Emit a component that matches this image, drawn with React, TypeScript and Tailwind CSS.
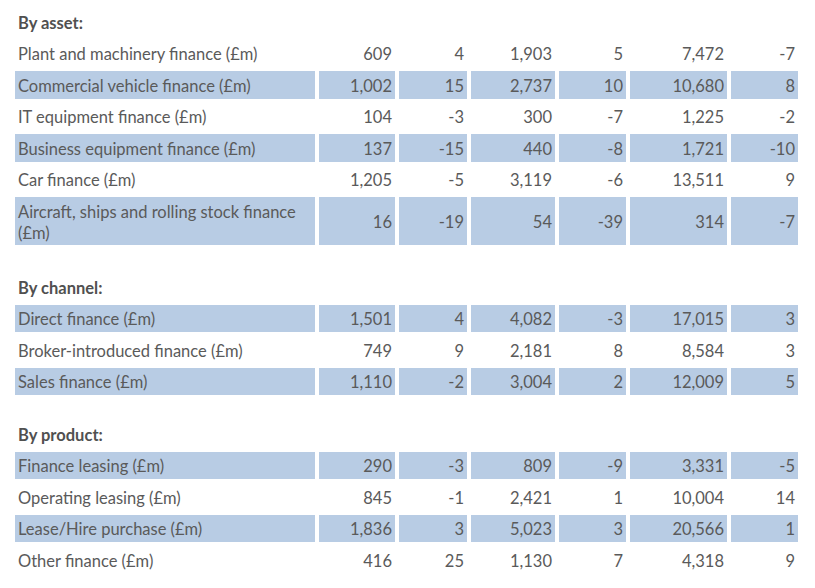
import React from 'react';

type Row =
  | { kind: 'head'; label: string }
  | { kind: 'gap'; h: string }
  | { kind: 'data'; label: string; values: string[]; shaded: boolean };

const rows: Row[] = [
  { kind: 'head', label: 'By asset:' },
  { kind: 'data', label: 'Plant and machinery finance (£m)', values: ['609', '4', '1,903', '5', '7,472', '-7'], shaded: false },
  { kind: 'data', label: 'Commercial vehicle finance (£m)', values: ['1,002', '15', '2,737', '10', '10,680', '8'], shaded: true },
  { kind: 'data', label: 'IT equipment finance (£m)', values: ['104', '-3', '300', '-7', '1,225', '-2'], shaded: false },
  { kind: 'data', label: 'Business equipment finance (£m)', values: ['137', '-15', '440', '-8', '1,721', '-10'], shaded: true },
  { kind: 'data', label: 'Car finance (£m)', values: ['1,205', '-5', '3,119', '-6', '13,511', '9'], shaded: false },
  { kind: 'data', label: 'Aircraft, ships and rolling stock finance (£m)', values: ['16', '-19', '54', '-39', '314', '-7'], shaded: true },
  { kind: 'gap', h: 'h-[20px]' },
  { kind: 'head', label: 'By channel:' },
  { kind: 'data', label: 'Direct finance (£m)', values: ['1,501', '4', '4,082', '-3', '17,015', '3'], shaded: true },
  { kind: 'data', label: 'Broker-introduced finance (£m)', values: ['749', '9', '2,181', '8', '8,584', '3'], shaded: false },
  { kind: 'data', label: 'Sales finance (£m)', values: ['1,110', '-2', '3,004', '2', '12,009', '5'], shaded: true },
  { kind: 'gap', h: 'h-[17px]' },
  { kind: 'head', label: 'By product:' },
  { kind: 'data', label: 'Finance leasing (£m)', values: ['290', '-3', '809', '-9', '3,331', '-5'], shaded: true },
  { kind: 'data', label: 'Operating leasing (£m)', values: ['845', '-1', '2,421', '1', '10,004', '14'], shaded: false },
  { kind: 'data', label: 'Lease/Hire purchase (£m)', values: ['1,836', '3', '5,023', '3', '20,566', '1'], shaded: true },
  { kind: 'data', label: 'Other finance (£m)', values: ['416', '25', '1,130', '7', '4,318', '9'], shaded: false },
];

const colWidths = ['w-[76px]', 'w-[68px]', 'w-[84px]', 'w-[67px]', 'w-[97px]', 'w-[67px]'];

export default function App() {
  return (
    <div className="w-[815px] h-[588px] bg-white overflow-hidden pt-[4px] pl-[11px] font-['Lato','Liberation_Sans',sans-serif] text-[16.5px] leading-[21px] text-[#5a5a5a]">
      <table className="border-separate border-spacing-1">
        <colgroup>
          <col className="w-[300px]" />
          {colWidths.map((w, i) => (
            <col key={i} className={w} />
          ))}
        </colgroup>
        <tbody>
          {rows.map((r, i) => {
            if (r.kind === 'gap') {
              return (
                <tr key={i} className={r.h}>
                  <td colSpan={7} className="p-0" />
                </tr>
              );
            }
            if (r.kind === 'head') {
              return (
                <tr key={i} className="h-[27.5px]">
                  <td colSpan={7} className="px-[3px] pt-[3px] pb-0 font-bold text-[#505050] align-middle">
                    {r.label}
                  </td>
                </tr>
              );
            }
            const bg = r.shaded ? 'bg-[#b8cce4]' : '';
            return (
              <tr key={i} className="h-[27.5px]">
                <td className={`w-[300px] px-[3px] pt-[4.5px] pb-[1.5px] align-middle text-left ${bg}`}>{r.label}</td>
                {r.values.map((v, j) => (
                  <td key={j} className={`${colWidths[j]} pl-[2px] pr-[3px] pt-[4.5px] pb-[1.5px] align-middle text-right ${bg}`}>
                    {v}
                  </td>
                ))}
              </tr>
            );
          })}
        </tbody>
      </table>
    </div>
  );
}
